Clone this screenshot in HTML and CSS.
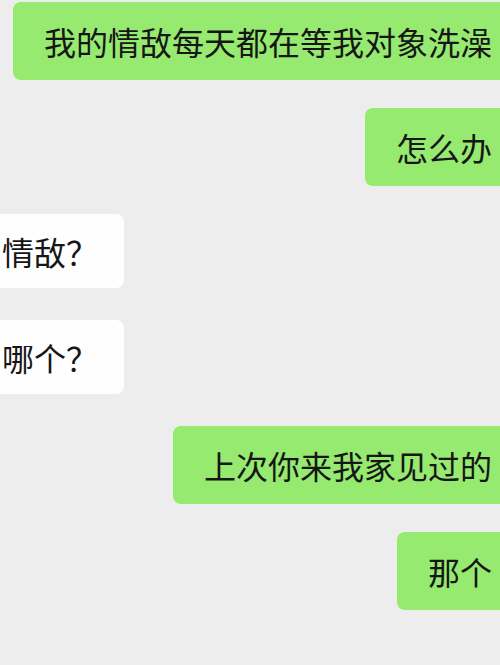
FILE: index.html
```html
<!DOCTYPE html>
<html lang="zh-CN">
<head>
  <meta charset="UTF-8" />
  <meta name="viewport" content="width=device-width, initial-scale=1.0"/>
  <title>聊天记录</title>
  <link rel="stylesheet" href="styles.css">
</head>
<body>
  <div class="chat">
    <div class="row me"><div class="bubble">我的情敌每天都在等我对象洗澡</div></div>
    <div class="row me"><div class="bubble">怎么办</div></div>
    <div class="row them"><div class="bubble">情敌？</div></div>
    <div class="row them"><div class="bubble">哪个？</div></div>
    <div class="row me"><div class="bubble">上次你来我家见过的</div></div>
    <div class="row me"><div class="bubble">那个</div></div>
  </div>
</body>
</html>
```

FILE: styles.css
```css
html, body {
  margin: 0;
  padding: 0;
}
body {
  font-family: "Noto Sans CJK SC", "Noto Sans", sans-serif;
  background: #ededed;
  width: 500px;
  height: 665px;
  overflow: hidden;
}
.chat {
  display: flex;
  flex-direction: column;
  gap: 28px;
  padding-top: 2px;
}
.row {
  display: flex;
  height: 78px;
  align-items: flex-start;
}
.row.me {
  justify-content: flex-end;
}
.row.them {
  justify-content: flex-start;
}
.bubble {
  font-size: 32px;
  line-height: 46px;
  color: #161616;
  white-space: nowrap;
  border-radius: 8px;
}
.me .bubble {
  background: #95ea6f;
  padding: 16px 31px;
  margin-right: -23px;
}
.them .bubble {
  background: #fefefe;
  padding: 14px 26px 14px 30px;
  margin-left: -28px;
}
```
